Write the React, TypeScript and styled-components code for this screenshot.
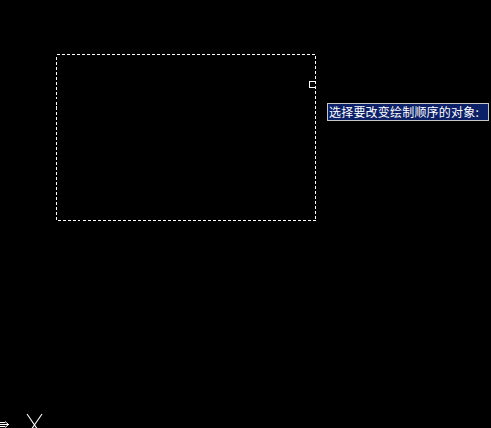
import React from "react";
import styled, { createGlobalStyle } from "styled-components";

const GlobalStyle = createGlobalStyle`
  html, body {
    margin: 0;
    padding: 0;
    background: #000;
    overflow: hidden;
  }
`;

const Canvas = styled.div`
  position: relative;
  width: 491px;
  height: 428px;
  background: #000;
  overflow: hidden;
`;

const Drawing = styled.svg`
  position: absolute;
  left: 0;
  top: 0;
  display: block;
`;

const Tooltip = styled.div`
  position: absolute;
  left: 327px;
  top: 103px;
  width: 159px;
  height: 16px;
  box-sizing: content-box;
  border: 1px solid #c8c8c8;
  background: #0c2068;
  color: #fff;
  font-family: "Noto Sans CJK SC", "Noto Sans", sans-serif;
  font-size: 12px;
  line-height: 16px;
  padding: 0 0 0 1px;
  white-space: nowrap;
  letter-spacing: 0.2px;
`;

export default function App() {
  return (
    <>
      <GlobalStyle />
      <Canvas>
        <Drawing width={491} height={428} viewBox="0 0 491 428" shapeRendering="crispEdges">
          <rect
            x={56.5}
            y={54.5}
            width={259}
            height={166}
            fill="none"
            stroke="#fff"
            strokeWidth={1}
            strokeDasharray="3 2"
          />
          <path d="M315 81.5 H309.5 V87.5 H315" fill="none" stroke="#fff" strokeWidth={1} />
          <g shapeRendering="auto" stroke="#fff" strokeWidth={1.1} fill="none">
            <line x1={27} y1={414} x2={38} y2={430} />
            <line x1={42} y1={414} x2={31} y2={430} />
          </g>
          <g stroke="#fff" strokeWidth={1} fill="none">
            <path d="M0 422.5 H5 M0 424.5 H9 M0 426.5 H5" />
            <path d="M5 421.5 L8 424 M5 427.5 L8 425" shapeRendering="auto" />
          </g>
        </Drawing>
        <Tooltip>选择要改变绘制顺序的对象:</Tooltip>
      </Canvas>
    </>
  );
}
